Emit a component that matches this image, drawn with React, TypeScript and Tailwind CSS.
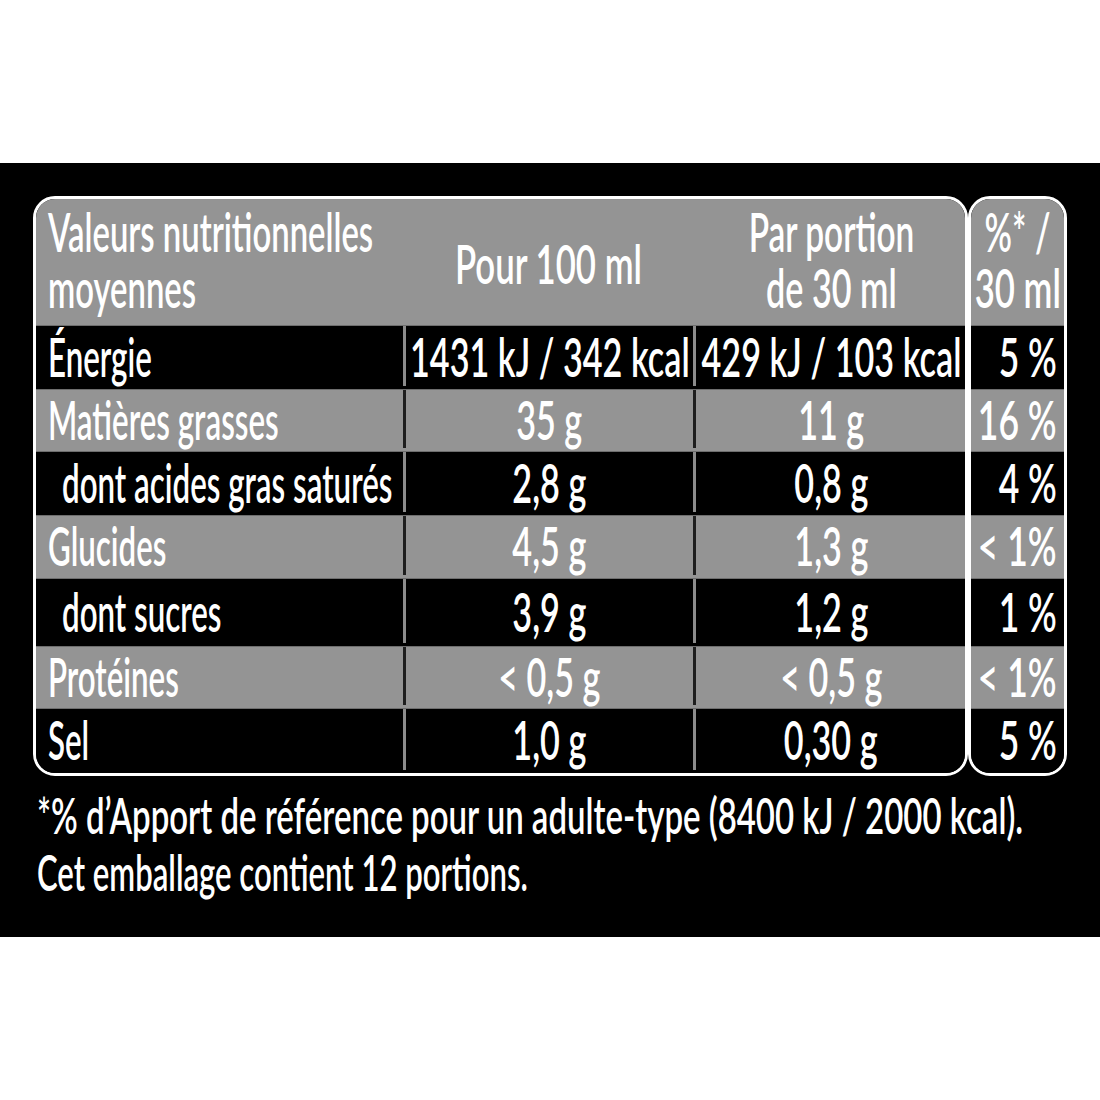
import type { ReactNode } from 'react'

type Align = 'left' | 'center' | 'right'

interface Row {
  label: string
  indent?: boolean
  per100: string
  portion: string
  ri: string
  gray: boolean
  h: string
}

const rows: Row[] = [
  { label: 'Énergie', per100: '1431 kJ / 342 kcal', portion: '429 kJ / 103 kcal', ri: '5 %', gray: false, h: 'h-[64px]' },
  { label: 'Matières grasses', per100: '35 g', portion: '11 g', ri: '16 %', gray: true, h: 'h-[62px]' },
  { label: 'dont acides gras saturés', indent: true, per100: '2,8 g', portion: '0,8 g', ri: '4 %', gray: false, h: 'h-[64px]' },
  { label: 'Glucides', per100: '4,5 g', portion: '1,3 g', ri: '< 1%', gray: true, h: 'h-[63px]' },
  { label: 'dont sucres', indent: true, per100: '3,9 g', portion: '1,2 g', ri: '1 %', gray: false, h: 'h-[68px]' },
  { label: 'Protéines', per100: '< 0,5 g', portion: '< 0,5 g', ri: '< 1%', gray: true, h: 'h-[62px]' },
  { label: 'Sel', per100: '1,0 g', portion: '0,30 g', ri: '5 %', gray: false, h: 'h-[65px]' },
]

// Condensed look: a semibold face squeezed horizontally
function T({ children, align = 'center', scale }: { children: ReactNode; align?: Align; scale: string }) {
  const origin = align === 'left' ? 'origin-left' : align === 'right' ? 'origin-right' : 'origin-center'
  return <span className={`inline-block shrink-0 whitespace-nowrap ${scale} ${origin}`}>{children}</span>
}

function Divider({ gray }: { gray: boolean }) {
  return <div className={`w-[3px] shrink-0 ${gray ? 'bg-[#1e1e1e]' : 'bg-[#8c8c8c]'}`} />
}

export default function App() {
  return (
    <div className="min-h-screen bg-white font-['Lato','Liberation_Sans',sans-serif] font-semibold text-white">
      <div className="h-[163px]" />

      <div className="bg-black h-[774px] pt-[33px] pl-[33px]">
        {/* ── Table ── */}
        <div className="flex">
          {/* main box */}
          <div className="w-[935px] h-[580px] border-[3px] border-white rounded-[22px] overflow-hidden flex flex-col">
            <div className="h-[126px] shrink-0 bg-[#949494] flex text-[53px] leading-[56px]">
              <div className="w-[367px] shrink-0 pl-[12px] pb-[5px] flex flex-col justify-center items-start">
                <T align="left" scale="scale-x-[0.619]">Valeurs nutritionnelles</T>
                <T align="left" scale="scale-x-[0.619]">moyennes</T>
              </div>
              <div className="w-[290px] shrink-0 flex items-center justify-center pt-[4px]">
                <T scale="scale-x-[0.656]">Pour 100 ml</T>
              </div>
              <div className="w-[273px] shrink-0 min-w-0 flex flex-col items-center justify-center pl-[3px] pb-[5px]">
                <T scale="scale-x-[0.63]">Par portion</T>
                <T scale="scale-x-[0.645]">de 30 ml</T>
              </div>
            </div>

            {rows.map(r => (
              <div
                key={r.label}
                className={`${r.h} shrink-0 flex border-t border-[#6e6e6e] pb-[3px] text-[53px] leading-none ${r.gray ? 'bg-[#949494]' : 'bg-black'}`}
              >
                <div className={`w-[367px] shrink-0 flex items-center justify-start ${r.indent ? 'pl-[26px]' : 'pl-[12px]'}`}>
                  <T align="left" scale="scale-x-[0.59]">{r.label}</T>
                </div>
                <Divider gray={r.gray} />
                <div className="w-[287px] shrink-0 min-w-0 flex items-center justify-center">
                  <T scale="scale-x-[0.645]">{r.per100}</T>
                </div>
                <Divider gray={r.gray} />
                <div className="w-[270px] shrink-0 min-w-0 flex items-center justify-center">
                  <T scale="scale-x-[0.645]">{r.portion}</T>
                </div>
              </div>
            ))}
          </div>

          {/* %RI box */}
          <div className="w-[99px] h-[580px] border-[3px] border-white rounded-[22px] overflow-hidden flex flex-col">
            <div className="h-[126px] shrink-0 bg-[#949494] flex flex-col items-center justify-center pb-[5px] text-[53px] leading-[56px]">
              <T scale="scale-x-[0.64]">%* /</T>
              <T scale="scale-x-[0.655]">30 ml</T>
            </div>
            {rows.map(r => (
              <div
                key={r.label}
                className={`${r.h} shrink-0 min-w-0 flex items-center justify-end pr-[7px] pb-[3px] border-t border-[#6e6e6e] text-[53px] leading-none ${r.gray ? 'bg-[#949494]' : 'bg-black'}`}
              >
                <T align="right" scale="scale-x-[0.67]">{r.ri}</T>
              </div>
            ))}
          </div>
        </div>

        {/* ── Footnote ── */}
        <div className="mt-[11px] pl-[4px] flex flex-col items-start text-[50px] leading-[57px]">
          <T align="left" scale="scale-x-[0.659]">
            *% d’Apport de référence pour un adulte-type (8400 kJ / 2000 kcal).
          </T>
          <T align="left" scale="scale-x-[0.622]">
            Cet emballage contient 12 portions.
          </T>
        </div>
      </div>
    </div>
  )
}
